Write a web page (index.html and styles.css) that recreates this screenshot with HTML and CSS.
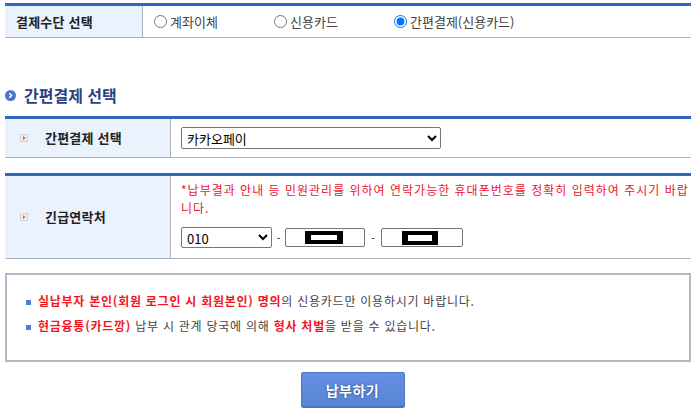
FILE: index.html
```html
<!DOCTYPE html>
<html lang="ko">
<head>
<meta charset="utf-8">
<title>간편결제 선택</title>
<link rel="stylesheet" href="styles.css">
</head>
<body>
<div class="page">
  <div class="form-table">
    <div class="row row-pay">
      <div class="th">결제수단 선택</div>
      <div class="td radios">
        <label class="radio"><input type="radio" name="pay">계좌이체</label>
        <label class="radio"><input type="radio" name="pay">신용카드</label>
        <label class="radio"><input type="radio" name="pay" checked>간편결제(신용카드)</label>
      </div>
    </div>
  </div>

  <h3 class="sec-title">
    <svg class="sec-icon" width="11" height="11" viewBox="0 0 11 11"><circle cx="5.5" cy="5.5" r="5.5" fill="#4a76c9"/><path d="M4.3 3.2 L6.6 5.5 L4.3 7.8" fill="none" stroke="#fff" stroke-width="1.6"/></svg>
    간편결제 선택
  </h3>

  <div class="form-table wide">
    <div class="row row-easy">
      <div class="th"><span class="th-icon"><svg width="8" height="8" viewBox="0 0 8 8"><rect x="0.5" y="0.5" width="7" height="7" fill="#eeeeee" stroke="#d4d4d4"/><path d="M3 2 L5.5 4 L3 6 Z" fill="#ef5a1e"/></svg></span>간편결제 선택</div>
      <div class="td">
        <select class="sel-easy"><option>카카오페이</option></select>
      </div>
    </div>
  </div>

  <div class="form-table wide gap-top">
    <div class="row row-phone">
      <div class="th"><span class="th-icon"><svg width="8" height="8" viewBox="0 0 8 8"><rect x="0.5" y="0.5" width="7" height="7" fill="#eeeeee" stroke="#d4d4d4"/><path d="M3 2 L5.5 4 L3 6 Z" fill="#ef5a1e"/></svg></span>긴급연락처</div>
      <div class="td td-phone">
        <p class="note">*납부결과 안내 등 민원관리를 위하여 연락가능한 휴대폰번호를 정확히 입력하여 주시기 바랍니다.</p>
        <div class="phone">
          <select class="sel-tel"><option>010</option></select>
          <span class="dash">-</span>
          <span class="tel-box tb1"><span class="redact"></span></span>
          <span class="dash dash2">-</span>
          <span class="tel-box tb2"><span class="redact"></span></span>
        </div>
      </div>
    </div>
  </div>

  <div class="notice">
    <ul>
      <li><b class="red">실납부자 본인(회원 로그인 시 회원본인) 명의</b>의 신용카드만 이용하시기 바랍니다.</li>
      <li><b class="red">현금융통(카드깡)</b> 납부 시 관계 당국에 의해 <b class="red">형사 처벌</b>을 받을 수 있습니다.</li>
    </ul>
  </div>

  <div class="btns"><button type="button" class="btn-pay">납부하기</button></div>
</div>
</body>
</html>
```
FILE: styles.css
```css
html, body { margin: 0; background: #fff; }
body {
  font-family: "Noto Sans CJK KR", "Noto Sans", sans-serif;
  font-size: 13px;
  color: #444;
}
.page { padding: 3px 1px 0 5px; }

.form-table {
  border-top: 3px solid #2f67bf;
  border-bottom: 1px solid #a9b3c2;
}
.row { display: grid; grid-template-columns: 138px 1fr; }
.wide .row { grid-template-columns: 166px 1fr; }
.th {
  background: #eaf2fd;
  border-right: 1px solid #a9b3c2;
  display: flex;
  align-items: center;
  font-weight: bold;
  color: #222;
  padding-left: 11px;
  line-height: 16px;
  letter-spacing: 0.2px;
}
.wide .th { padding-left: 15px; }
.th-icon { display: inline-flex; width: 8px; height: 8px; margin-right: 17px; }
.td { display: flex; align-items: center; padding-left: 10px; }

.row-pay { height: 31px; }
.radios { padding-left: 11px; }
.radio { display: inline-flex; align-items: center; width: 120px; color: #444; line-height: 16px; }
.radio:last-child { width: auto; }
.radio input { margin: 0 3px 0 0; width: 13px; height: 13px; }

.sec-title {
  margin: 47px 0 11px;
  font-size: 16px;
  line-height: 20px;
  color: #2e3f84;
  display: flex;
  align-items: center;
}
.sec-icon { margin-right: 8px; }

.row-easy { height: 38px; }
.sel-easy {
  width: 260px; height: 22px;
  font-family: inherit; font-size: 13px; color: #000;
  border: 1px solid #767676; border-radius: 2px; background: #fff;
  padding: 0 0 0 1px;
}

.gap-top { margin-top: 15px; }
.row-phone { height: 82px; }
.td-phone { flex-direction: column; align-items: flex-start; justify-content: flex-start; padding-top: 5px; }
.note {
  margin: 0;
  color: #ec1530;
  font-size: 12px;
  line-height: 18px;
  letter-spacing: 1px;
  word-break: break-all;
  padding-right: 2px;
}
.phone { display: flex; align-items: center; margin-top: 10px; height: 21px; }
.sel-tel {
  width: 91px; height: 21px;
  font-family: inherit; font-size: 13px; color: #000;
  border: 1px solid #767676; border-radius: 2px; background: #fff;
  padding: 0 0 0 1px;
}
.dash { width: 13px; text-align: center; color: #444; font-size: 12px; }
.dash2 { width: 16px; }
.tel-box {
  box-sizing: border-box;
  height: 19px;
  border: 1px solid #767676;
  border-radius: 2px;
  background: #fff;
  display: flex; align-items: center;
}
.tb1 { width: 80px; padding-left: 19px; }
.tb2 { width: 82px; padding-left: 20px; }
.redact {
  box-sizing: border-box;
  width: 38px; height: 13px;
  border: solid #000;
  border-width: 4px 6px 4px 6px;
  background: #fff;
}
.tb2 .redact { width: 36px; height: 14px; }

.notice {
  margin-top: 14px;
  border: 2px solid #b4b8c6;
  height: 89px;
  box-sizing: border-box;
}
.notice ul { list-style: none; margin: 0; padding: 13px 0 0 19px; }
.notice li { font-size: 12px; line-height: 25px; color: #444; letter-spacing: 0.75px; }
.notice li::before {
  content: "";
  display: inline-block;
  width: 5px; height: 5px;
  background: #4a7dd6;
  margin-right: 7px;
  vertical-align: 1px;
}
.red { color: #f4141e; }

.btns { display: flex; justify-content: center; margin-top: 10px; padding-left: 9px; }
.btn-pay {
  width: 104px; height: 36px;
  border: 1px solid #4a75c8;
  border-radius: 2px;
  background: linear-gradient(#6390e0, #5784d6);
  box-shadow: inset 0 -1px 0 #4b74c0;
  color: #fff;
  font-family: inherit;
  font-weight: bold;
  font-size: 14px;
  letter-spacing: 0.5px;
  text-shadow: 0 0 2px #1e3a78;
}
```
